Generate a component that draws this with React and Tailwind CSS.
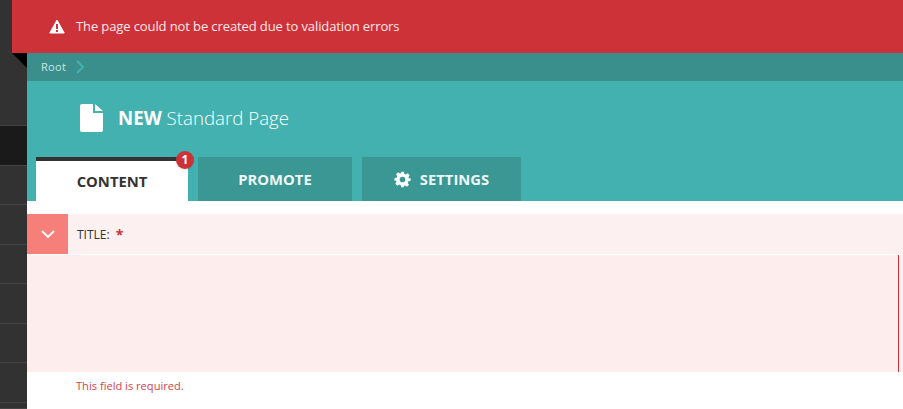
import React from "react";

const font = { fontFamily: '"Open Sans", sans-serif' };

function Gear() {
  return (
    <svg width="17" height="17" viewBox="0 0 24 24" fill="white" aria-hidden="true">
      <path fillRule="evenodd" d="M10 1h4l.6 3.1c.7.2 1.4.5 2 .9l2.7-1.8 2.8 2.8-1.8 2.7c.4.6.7 1.3.9 2L23.3 10v4l-3.1.6c-.2.7-.5 1.4-.9 2l1.8 2.7-2.8 2.8-2.7-1.8c-.6.4-1.3.7-2 .9L14 23h-4l-.6-3.1c-.7-.2-1.4-.5-2-.9l-2.7 1.8-2.8-2.8 1.8-2.7c-.4-.6-.7-1.3-.9-2L.7 14v-4l3.1-.6c.2-.7.5-1.4.9-2L2.9 4.7l2.8-2.8 2.7 1.8c.6-.4 1.3-.7 2-.9L10 1zm2 7a4 4 0 1 0 0 8 4 4 0 0 0 0-8z" />
    </svg>
  );
}

function SidebarRows() {
  const rows = [
    ["h-[126px]", "bg-[#323232]"],
    ["h-[40px]", "bg-[#1a1a1a]"],
    ["h-[39px]", "bg-[#323232]"],
    ["h-[40px]", "bg-[#323232]"],
    ["h-[39px]", "bg-[#323232]"],
    ["h-[40px]", "bg-[#323232]"],
    ["h-[39px]", "bg-[#323232]"],
    ["h-[40px]", "bg-[#323232]"],
    ["h-[6px]", "bg-[#323232]"],
  ];
  return (
    <div className="flex w-[27px] shrink-0 flex-col">
      {rows.map(([h, bg], i) => (
        <div key={i} className={`${h} ${bg} border-b border-[#444444]`} />
      ))}
    </div>
  );
}

export default function App() {
  return (
    <div className="relative flex h-[409px] w-[903px] overflow-hidden bg-white" style={font}>
      <SidebarRows />
      <main className="flex min-w-0 flex-1 flex-col pt-[53px]">
        <div className="flex h-[28px] items-center bg-[#3a8f8c] pl-[14px] text-[11px] tracking-[0.3px] text-[#c9e6e4]">
          <span>Root</span>
          <svg className="ml-[10px]" width="9" height="14" viewBox="0 0 9 14" fill="none" stroke="#43b1b0" strokeWidth="2">
            <path d="M1 1l6 6-6 6" />
          </svg>
        </div>
        <header className="h-[120px] bg-[#43b1b0]">
          <div className="flex h-[76px] items-center pb-[2px] pl-[53px]">
            <svg width="23" height="28" viewBox="0 0 23 28" fill="white" aria-hidden="true">
              <path d="M2 0h11v9h10v17a2 2 0 0 1-2 2H2a2 2 0 0 1-2-2V2a2 2 0 0 1 2-2z" />
              <path d="M15 0l8 7h-8z" />
            </svg>
            <h1 className="ml-[15px] text-[18.7px] font-light text-white">
              <span className="font-bold">NEW</span> Standard Page
            </h1>
          </div>
          <nav className="flex gap-[10px] pl-[9px]">
            <div className="relative flex h-[44px] w-[152px] items-center justify-center border-t-4 border-[#333333] bg-white text-[14.8px] font-bold text-[#333333]">
              CONTENT
              <span className="absolute right-[-6px] top-[-10px] flex h-[18px] w-[18px] items-center justify-center rounded-full bg-[#cd3238] text-[12px] font-bold text-white shadow">
                1
              </span>
            </div>
            <div className="flex h-[44px] w-[154px] items-center justify-center bg-[#3a9794] text-[14.8px] font-bold text-[#eef7f7]">
              PROMOTE
            </div>
            <div className="flex h-[44px] w-[159px] items-center justify-center gap-[9px] bg-[#3a9794] text-[14.8px] font-bold text-[#eef7f7]">
              <Gear />
              SETTINGS
            </div>
          </nav>
        </header>
        <section className="mt-[13px] flex h-[40px] items-center bg-[#fcf1f0]">
          <div className="flex h-full w-[41px] items-center justify-center bg-[#f77f7a]">
            <svg width="14" height="9" viewBox="0 0 14 9" fill="none" stroke="white" strokeWidth="1.8">
              <path d="M1 1l6 6 6-6" />
            </svg>
          </div>
          <label className="ml-[9px] flex items-center pt-[1px] text-[12px] text-[#333333]">
            TITLE:
            <span className="ml-[6px] text-[14px] font-bold text-[#cd3238]">*</span>
          </label>
        </section>
        <div className="mt-[1px] flex h-[117px] bg-[#fdeded]">
          <div className="flex-1" />
          <div className="mr-[4px] w-[1px] bg-[#cd3238]" />
        </div>
        <p className="ml-[49px] mt-[6px] text-[11.1px] text-[#d0444c]">This field is required.</p>
      </main>
      <div className="absolute left-[12px] right-0 top-0 flex h-[53px] items-center bg-[#cd3238] pl-[37px] text-[13px] tracking-[-0.11px] text-[#fbe9ea]">
        <svg width="16" height="15" viewBox="0 0 16 15" aria-hidden="true">
          <path fill="white" stroke="white" strokeWidth="1" strokeLinejoin="round" d="M8 1 15.2 14H.8z" />
          <rect x="7" y="5" width="2" height="5" fill="#cd3238" />
          <rect x="7" y="11" width="2" height="2" fill="#cd3238" />
        </svg>
        <span className="ml-[11px]">The page could not be created due to validation errors</span>
      </div>
      <div className="absolute left-[12px] top-[53px] h-0 w-0 border-l-[15px] border-t-[15px] border-l-transparent border-t-black" />
    </div>
  );
}
